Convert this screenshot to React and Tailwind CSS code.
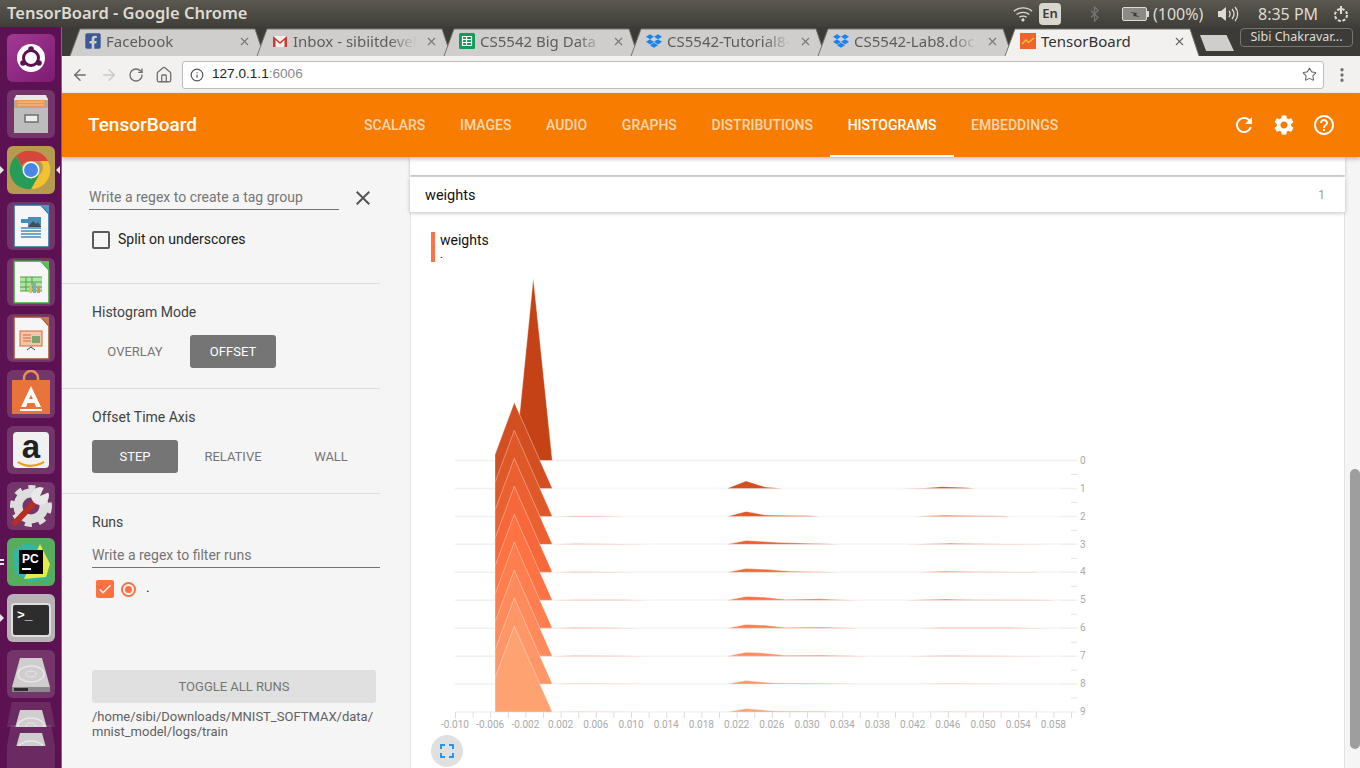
import { Fragment } from 'react'
import { ArrowLeft, ArrowRight, Home, Info, MoreVertical, RotateCw, Star, X } from 'lucide-react'
import { FaDropbox, FaFacebookSquare } from 'react-icons/fa'
import { MdCheck, MdClose, MdFullscreen, MdHelpOutline, MdRefresh, MdSettings } from 'react-icons/md'

const navItems = ['Scalars', 'Images', 'Audio', 'Graphs', 'Distributions', 'Histograms', 'Embeddings']
const layerColors = ['#c54216', '#d34e20', '#df5828', '#ea6030', '#f6683a', '#ff7243', '#ff7e50', '#ff8a5c', '#ff9668', '#ffa272']

// tail bumps per step, [x, height above the baseline]
const tails = [
  [],
  [[727, 0], [746, 7.5], [765, 1.5], [783, 0], [900, 0], [925, 0.5], [942, 1.8], [965, 1], [976, 0]],
  [[575, 0.5], [600, 0.4], [624, 0], [727, 0], [746, 5], [765, 1.4], [810, 0.6], [820, 0], [915, 0], [930, 0.6], [945, 1.2], [975, 0.6], [1005, 0.4], [1010, 0]],
  [[575, 0.6], [620, 0.4], [650, 0], [727, 0], [746, 3.8], [780, 1.8], [825, 0.6], [840, 0], [905, 0], [935, 0.6], [950, 1.2], [975, 0.6], [1005, 0.4], [1055, 0]],
  [[575, 0.6], [610, 0.4], [640, 0], [727, 0], [746, 3.8], [765, 3], [790, 1.1], [830, 0.4], [838, 0], [918, 0], [945, 1.1], [975, 0.6], [1035, 0.3], [1040, 0]],
  [[575, 0.6], [620, 0.4], [650, 0], [727, 0], [746, 3.8], [765, 3], [785, 0.8], [820, 1.6], [840, 0.4], [860, 0], [905, 0], [945, 1.2], [975, 0.4], [1010, 0.6], [1050, 0.3], [1055, 0]],
  [[575, 0.6], [610, 0.4], [640, 0], [727, 0], [746, 3.8], [765, 3], [785, 0.8], [820, 1.1], [860, 0], [918, 0], [945, 0.7], [1010, 0.6], [1050, 0]],
  [[575, 0.6], [620, 0.4], [650, 0], [727, 0], [746, 3.8], [765, 3], [785, 0.8], [820, 1.1], [870, 0], [905, 0], [945, 0.7], [1050, 0]],
  [[575, 0.5], [620, 0.3], [650, 0], [727, 0], [746, 3.5], [775, 1], [820, 0.8], [860, 0], [918, 0], [945, 0.6], [1050, 0]],
  [[575, 0.5], [620, 0.3], [650, 0], [727, 0], [746, 3.5], [775, 1], [820, 0.8], [850, 0], [918, 0], [945, 0.6], [1050, 0]],
]

const xLabels = ['-0.010', '-0.006', '-0.002', '0.002', '0.006', '0.010', '0.014', '0.018', '0.022', '0.026', '0.030', '0.034', '0.038', '0.042', '0.046', '0.050', '0.054', '0.058']

function layerPoints(k, b) {
  if (k === 0) return `515,${b} 533.3,278 552.3,${b}`
  const tail = tails[k].map(([x, h]) => `${x},${b - h}`).join(' ')
  return `495,${b} 495,${b - 34} 514.3,${b - 86} 552.3,${b} ${tail} 1060,${b}`
}

function HistogramChart() {
  return (
    <svg viewBox="431 270 680 465" width="680" height="465" className="block">
      {layerColors.map((color, k) => {
        const b = 460.5 + 27.95 * k
        return (
          <Fragment key={k}>
            <line x1="455" x2="1077" y1={b} y2={b} stroke="#f0f0f0" strokeWidth="1.5" />
            <polygon points={layerPoints(k, b)} fill={color} stroke="#ffffff" strokeOpacity="0.45" strokeWidth="0.8" />
          </Fragment>
        )
      })}
      {Array.from({ length: 36 }, (_, i) => (
        <line key={i} x1={455.5 + i * 17.6} x2={455.5 + i * 17.6} y1="712" y2="718" stroke="#dddddd" />
      ))}
      {xLabels.map((label, i) => (
        <text key={label} x={455 + i * 35.2} y="728" textAnchor="middle" fontSize="10" fill="#aaaaaa">{label}</text>
      ))}
      {layerColors.map((_, k) => (
        <Fragment key={k}>
          <line x1="1071" x2="1077" y1={474.5 + 27.95 * k} y2={474.5 + 27.95 * k} stroke="#e3e3e3" opacity={k === 9 ? 0 : 1} />
          <text x="1080" y={464 + 27.85 * k} fontSize="10" fill="#aaaaaa">{k}</text>
        </Fragment>
      ))}
    </svg>
  )
}

function Tile({ bg = 'bg-white/15', children }) {
  return <div className={`h-12 w-12 shrink-0 overflow-hidden rounded-md ${bg}`}>{children}</div>
}

function DocIcon({ color, corner, children }) {
  return (
    <svg viewBox="0 0 48 48" className="h-12 w-12">
      <path d="M7 3h27l8 9v33H7z" fill="#f6f6f6" stroke={color} strokeWidth="1.5" />
      <path d="M34 3h8v9z" fill={corner} />
      {children}
    </svg>
  )
}

function ChromeLogo() {
  return (
    <svg viewBox="0 0 48 48" className="h-12 w-12">
      <path d="M24 5a19 19 0 0 1 17 10H24a9 9 0 0 0-9 5L9 10a19 19 0 0 1 15-5z" fill="#d8463b" />
      <path d="M41 15a19 19 0 0 1-17 28l8-14a9 9 0 0 0 1-14z" fill="#f2c230" />
      <path d="M9 10l9 16a9 9 0 0 0 14 3l-8 14A19 19 0 0 1 9 10z" fill="#279c57" />
      <circle cx="24" cy="24" r="8.5" fill="#fff" />
      <circle cx="24" cy="24" r="7" fill="#4a86e8" />
    </svg>
  )
}

function DiskIcon() {
  return (
    <svg viewBox="0 0 48 48" className="h-12 w-12">
      <path d="M13 8h22l8 29v5H5v-5z" fill="#cfcdcd" />
      <ellipse cx="24" cy="24" rx="13" ry="8" fill="none" stroke="#e8e8e8" strokeWidth="1.5" />
      <ellipse cx="24" cy="24" rx="5" ry="3" fill="none" stroke="#e8e8e8" />
      <path d="M5 37h38v5H5z" fill="#8a8a8a" />
      <path d="M7 38h14v3H7z" fill="#2d2d2d" />
    </svg>
  )
}

function Launcher() {
  return (
    <div className="relative flex h-full w-[62px] shrink-0 flex-col gap-2 overflow-hidden border-r border-[#8d5f87] bg-[#5c1252] pl-[7px] pt-[7px]">
      <Tile bg="bg-gradient-to-br from-[#a23a93] to-[#7d1a72]">
        <svg viewBox="0 0 48 48" className="h-12 w-12">
          <circle cx="24" cy="24" r="14" fill="#fff" />
          <circle cx="24" cy="24" r="7.5" fill="none" stroke="#5c1252" strokeWidth="3" />
          <circle cx="24" cy="15" r="2.8" fill="#5c1252" />
          <circle cx="16" cy="29" r="2.8" fill="#5c1252" />
          <circle cx="32" cy="29" r="2.8" fill="#5c1252" />
        </svg>
      </Tile>
      <Tile>
        <svg viewBox="0 0 48 48" className="h-12 w-12">
          <path d="M7 8h34v35H7z" fill="#a9a9a9" />
          <path d="M9 5h30l2 5H7z" fill="#e6e6e6" />
          <path d="M9 10h30v8H9z" fill="#e29a5b" />
          <path d="M11 12h26M11 15h26" stroke="#f3c48f" />
          <path d="M7 18h34v25H7z" fill="#bdbdbd" />
          <rect x="18" y="25" width="13" height="7" fill="#eeeeee" stroke="#6f6f6f" strokeWidth="1.5" />
        </svg>
      </Tile>
      <Tile bg="bg-[#b59a50]"><ChromeLogo /></Tile>
      <Tile>
        <DocIcon color="#1f6d96" corner="#4d9bc4">
          <rect x="14" y="17" width="7" height="4" fill="#3f8fc0" />
          <rect x="21" y="15" width="13" height="10" fill="#4a8db5" />
          <path d="M21 25l5-6 3 3 2-2 3 5z" fill="#3d4f5c" />
          <path d="M14 26h20M14 29h20M14 32h20M14 35h20" stroke="#3f8fc0" strokeWidth="1.5" />
        </DocIcon>
      </Tile>
      <Tile>
        <DocIcon color="#3aa535" corner="#5dbf58">
          <path d="M13 19h22v14H13z" fill="#b5e0a8" />
          <path d="M13 19h22M13 24h22M13 29h22M13 33h22M19 19v14M25 19v14" stroke="#43a73e" />
          <rect x="22" y="27" width="3" height="8" fill="#e6b85c" />
          <rect x="26" y="25" width="3" height="10" fill="#7fa8cf" />
          <rect x="30" y="28" width="3" height="7" fill="#d98d6a" />
        </DocIcon>
      </Tile>
      <Tile>
        <DocIcon color="#a2502a" corner="#c1794f">
          <rect x="13" y="17" width="22" height="15" fill="#f3c6ac" stroke="#cf6a38" />
          <path d="M16 21h8M16 24h8M16 27h8" stroke="#cf6a38" />
          <rect x="25" y="22" width="8" height="7" fill="#79a570" />
          <path d="M20 36l4-3 4 3" fill="none" stroke="#444" />
        </DocIcon>
      </Tile>
      <Tile>
        <svg viewBox="0 0 48 48" className="h-12 w-12">
          <path d="M17 12V8a7 7 0 0 1 14 0v4" fill="none" stroke="#ee8d57" strokeWidth="2.5" />
          <path d="M5 10h38v34H5z" fill="#e8743b" />
          <path fillRule="evenodd" d="M24 16l10 21h-5l-1.5-4h-7L19 37h-5zM24 25l-2 4h4z" fill="#fff" />
          <rect x="13" y="39" width="22" height="2" fill="#fff" />
        </svg>
      </Tile>
      <Tile>
        <div className="m-[6px] flex h-9 w-9 flex-col items-center rounded-sm bg-[#f1f1f1]">
          <span className="font-['Liberation_Sans',sans-serif] text-[33px] font-bold leading-[30px] text-[#222]">a</span>
          <svg viewBox="0 0 36 8" className="-mt-px w-8"><path d="M3 1c8 6 20 6 30 0" fill="none" stroke="#ee9b1e" strokeWidth="2.5" /></svg>
        </div>
      </Tile>
      <Tile>
        <svg viewBox="0 0 48 48" className="h-12 w-12">
          <circle cx="24" cy="24" r="13" fill="none" stroke="#dddddd" strokeWidth="9" />
          <circle cx="24" cy="24" r="18.5" fill="none" stroke="#dddddd" strokeWidth="5" strokeDasharray="7 7" />
          <path d="M8 41l21-22" stroke="#b52d23" strokeWidth="6" strokeLinecap="round" />
          <circle cx="33" cy="14" r="9" fill="#e8e8e8" />
          <path d="M33 14l5-11 7 6z" fill="#76386d" />
        </svg>
      </Tile>
      <Tile bg="bg-[#55ad5d]">
        <svg viewBox="0 0 48 48" className="h-12 w-12">
          <path d="M6 12l14-7 14 5 8 31-18 3-16-8z" fill="#2fb9a5" />
          <path d="M33 6l10 20-4 13-22 2z" fill="#e7ea4c" />
          <rect x="12" y="12" width="24" height="24" fill="#000" />
          <text x="15" y="25" fontSize="12" fontWeight="700" fill="#fff" fontFamily="Liberation Sans">PC</text>
          <rect x="15" y="30" width="9" height="2" fill="#fff" />
        </svg>
      </Tile>
      <Tile bg="bg-[#b8b2b6]">
        <div className="m-1 mt-[9px] h-[34px] w-10 rounded-sm border-2 border-[#ddd] bg-[#2d2d2d] pl-1 pt-1 font-['Liberation_Mono',monospace] text-[13px] font-bold leading-none text-white">&gt;_</div>
      </Tile>
      <Tile><DiskIcon /></Tile>
      <div className="-mt-1 h-[30px] w-12 overflow-hidden bg-white/10 [clip-path:polygon(10%_0,90%_0,100%_100%,0_100%)]"><DiskIcon /></div>
      <div className="-mt-[10px] h-[26px] w-12 overflow-hidden bg-white/10 [clip-path:polygon(8%_0,92%_0,100%_100%,0_100%)]"><DiskIcon /></div>
      <div className="-mt-2 h-[26px] w-12 bg-white/10" />
      <span className="absolute left-0 top-[139px] h-[8px] w-[4px] bg-[#e8e8e8] [clip-path:polygon(0_0,100%_50%,0_100%)]" />
      <span className="absolute right-[1px] top-[139px] h-[8px] w-[4px] bg-[#e8e8e8] [clip-path:polygon(100%_0,100%_100%,0_50%)]" />
      <span className="absolute left-0 top-[532px] h-[2px] w-[4px] bg-[#e8e8e8]" />
      <span className="absolute left-0 top-[536px] h-[2px] w-[4px] bg-[#e8e8e8]" />
      <span className="absolute left-0 top-[587px] h-[8px] w-[4px] bg-[#e8e8e8] [clip-path:polygon(0_0,100%_50%,0_100%)]" />
    </div>
  )
}

function GmailIcon() {
  return (
    <svg viewBox="0 0 16 16" className="h-4 w-4">
      <path d="M1 3h14v11H1z" fill="#eeeeee" />
      <path d="M1 14V3l7 6 7-6v11h-2.5V7L8 11 3.5 7v7z" fill="#d3382c" />
    </svg>
  )
}

function SheetIcon() {
  return (
    <svg viewBox="0 0 16 16" className="h-4 w-4">
      <rect width="16" height="16" rx="1.5" fill="#0f9d58" />
      <path d="M3.5 3.5h9v9h-9zM3.5 6.5h9M3.5 9.5h9M7.5 3.5v9" fill="none" stroke="#fff" strokeWidth="1.2" />
    </svg>
  )
}

function BoardIcon() {
  return (
    <svg viewBox="0 0 16 16" className="h-4 w-4">
      <rect width="16" height="16" fill="#f0642c" />
      <path d="M2 11l4-4 2.5 2.5L14 5" fill="none" stroke="#f7c23c" strokeWidth="1.3" />
    </svg>
  )
}

const dropbox = <FaDropbox className="h-4 w-4 text-[#1a82e8]" />
const tabs = [
  { title: 'Facebook', icon: <FaFacebookSquare className="h-4 w-4 scale-110 text-[#3b5998]" /> },
  { title: 'Inbox - sibiitdevel', icon: <GmailIcon /> },
  { title: 'CS5542 Big Data', icon: <SheetIcon /> },
  { title: 'CS5542-Tutorial8-', icon: dropbox },
  { title: 'CS5542-Lab8.doc', icon: dropbox },
  { title: 'TensorBoard', icon: <BoardIcon />, active: true },
]

function ChromeTab({ title, icon, active }) {
  return (
    <div className={`relative -mr-[9px] h-[28px] w-[196px] shrink-0 ${active ? 'z-10' : ''}`}>
      <svg viewBox="0 0 196 28" className="absolute inset-0 h-full w-full">
        <path d="M1 28 L11 1 H186 L195 28" fill={active ? '#f2f1f0' : '#cfcecc'} stroke="#77756f" strokeWidth="1" />
      </svg>
      <div className="relative flex h-full items-center pb-[2px] pl-4">
        {icon}
        <span className={`ml-[5px] w-[124px] overflow-hidden whitespace-nowrap text-[15px] leading-[24px] ${active ? 'text-[#333]' : 'text-[#5d5d5d] [mask-image:linear-gradient(to_right,black_78%,transparent)]'}`}>{title}</span>
        <X className={`ml-2 h-[13px] w-[13px] ${active ? 'text-[#666]' : 'text-[#777]'}`} strokeWidth={2} />
      </div>
    </div>
  )
}

function TopBar() {
  return (
    <div className="flex h-[27px] shrink-0 items-center bg-gradient-to-b from-[#5a5850] to-[#3f3e39] pl-[7px] font-['Noto_Sans',sans-serif] text-[#dfdbd2]">
      <span className="w-[1006px] text-[16.5px] font-semibold">TensorBoard - Google Chrome</span>
      <svg viewBox="0 0 22 16" className="h-[16px] w-[20px]" fill="none" stroke="#dfdbd2" strokeWidth="1.5">
        <path d="M1 5c5-5 15-5 20 0M4 8.5c4-3 10-3 14 0M7 11.5c2-1.5 6-1.5 8 0" />
        <circle cx="11" cy="14.5" r="1" fill="#dfdbd2" />
      </svg>
      <span className="ml-[6px] flex h-[22px] w-[22px] items-center justify-center rounded-sm bg-[#d9d6cc] text-[13px] font-semibold text-[#3c3b37]">En</span>
      <svg viewBox="0 0 10 18" className="ml-[29px] h-[16px] w-[9px]" fill="none" stroke="#77756f" strokeWidth="1.4"><path d="M1 5l8 8-4 4V1l4 4-8 8" /></svg>
      <svg viewBox="0 0 27 14" className="ml-[23px] h-[14px] w-[27px]">
        <rect x="0.5" y="0.5" width="24" height="13" rx="1.5" fill="#8b8a84" stroke="#dfdbd2" />
        <rect x="25" y="4" width="2" height="6" fill="#dfdbd2" />
        <path d="M8 5l7 1-1 2 4 2-7-1 1-2z" fill="#3c3b37" />
      </svg>
      <span className="ml-[4px] w-[52px] text-[16px]">(100%)</span>
      <svg viewBox="0 0 22 16" className="ml-[12px] h-[16px] w-[22px]" fill="none" stroke="#dfdbd2" strokeWidth="1.3">
        <path d="M1 5h3l5-4v14l-5-4H1z" fill="#dfdbd2" stroke="none" />
        <path d="M12 5c1.5 2 1.5 4 0 6M15 3c2.5 3 2.5 7 0 10M18 1c3.5 4 3.5 10 0 14" />
      </svg>
      <span className="ml-[19px] w-[60px] whitespace-nowrap text-[16px]">8:35 PM</span>
      <svg viewBox="0 0 18 18" className="ml-[14px] h-[18px] w-[18px]" fill="none" stroke="#dfdbd2" strokeWidth="2">
        <circle cx="9" cy="10" r="6" strokeDasharray="3 1.7" />
        <path d="M9 1v8" />
      </svg>
    </div>
  )
}

function TabStrip() {
  return (
    <div className="flex h-[29px] shrink-0 bg-[#3c3b37] pl-[7px] pt-px font-['Noto_Sans',sans-serif]">
      {tabs.map((tab) => <ChromeTab key={tab.title} {...tab} />)}
      <div className="ml-[9px] mt-[7px] h-[16px] w-[34px] bg-[#cfcecc] [clip-path:polygon(0_0,78%_0,100%_100%,18%_100%)]" />
      <div className="ml-[6px] flex h-[19px] w-[113px] items-center justify-center rounded-sm border border-[#77756f] text-[12.5px] text-[#dfdbd2]">Sibi Chakravar...</div>
    </div>
  )
}

function Toolbar() {
  return (
    <div className="flex h-[37px] shrink-0 items-center bg-[#f2f1f0] pl-[9px] text-[#6e6e6e]">
      <ArrowLeft className="h-[18px] w-[18px]" strokeWidth={1.8} />
      <ArrowRight className="ml-[11px] h-[18px] w-[18px] text-[#c9c9c9]" strokeWidth={1.8} />
      <RotateCw className="ml-[10px] h-[16px] w-[16px]" strokeWidth={2} />
      <Home className="ml-[11px] h-[18px] w-[18px]" strokeWidth={1.7} />
      <div className="ml-[9px] flex h-[28px] w-[1142px] items-center rounded-[3px] border border-[#bdbdbd] bg-white pl-[7px] pr-[6px]">
        <Info className="h-[14px] w-[14px] text-[#555]" strokeWidth={2} />
        <span className="ml-[8px] flex-1 font-['Liberation_Sans',sans-serif] text-[13.6px] text-[#222]">127.0.1.1<span className="text-[#8a8a8a]">:6006</span></span>
        <Star className="h-[15px] w-[15px] text-[#666]" strokeWidth={1.7} />
      </div>
      <MoreVertical className="ml-[9px] h-[18px] w-[18px]" strokeWidth={2.4} />
    </div>
  )
}

function Header() {
  return (
    <div className="relative z-10 flex h-[64px] shrink-0 items-center bg-[#f77c00] pl-[26px] text-white shadow-[0_2px_4px_rgba(0,0,0,0.25)]">
      <span className="w-[258.75px] text-[19px] font-medium">TensorBoard</span>
      <nav className="flex h-full">
        {navItems.map((item) => {
          const on = item === 'Histograms'
          return (
            <span key={item} className={`flex h-full items-center border-b-2 px-[17.35px] pt-[2px] text-[14px] font-medium uppercase ${on ? 'border-white text-white' : 'border-transparent text-white/70'}`}>{item}</span>
          )
        })}
      </nav>
      <div className="ml-[156px] flex items-center gap-[16px]">
        <MdRefresh className="h-6 w-6" />
        <MdSettings className="h-6 w-6" />
        <MdHelpOutline className="h-6 w-6" />
      </div>
    </div>
  )
}

function ModeButton({ label, on, className = '' }) {
  return (
    <span className={`flex h-[33px] w-[86px] items-center justify-center rounded-[3px] pt-px text-[13px] uppercase ${on ? 'bg-[#757575] text-white' : 'text-[#757575]'} ${className}`}>{label}</span>
  )
}

function Sidebar() {
  return (
    <div className="w-[332px] shrink-0 bg-[#f5f5f5] text-[14px]">
      <div className="h-[127px] w-[318px] border-b border-[#dcdcdc] pt-[29px]">
        <div className="flex items-center pl-[27px]">
          <div className="h-[23px] w-[250px] border-b border-[#757575] leading-[20px] text-[#757575]">Write a regex to create a tag group</div>
          <MdClose className="ml-[12px] h-6 w-6 text-[#555]" />
        </div>
        <div className="ml-[30px] mt-[19px] flex items-center">
          <span className="h-[18px] w-[18px] rounded-[2px] border-2 border-[#5a5a5a]" />
          <span className="ml-2 text-[#212121]">Split on underscores</span>
        </div>
      </div>
      <div className="h-[105px] w-[318px] border-b border-[#dcdcdc] pl-[30px] pt-5">
        <div className="leading-4 text-[#424242]">Histogram Mode</div>
        <div className="mt-[15px] flex gap-3">
          <ModeButton label="Overlay" />
          <ModeButton label="Offset" on />
        </div>
      </div>
      <div className="h-[105px] w-[318px] border-b border-[#dcdcdc] pl-[30px] pt-5">
        <div className="leading-4 text-[#424242]">Offset Time Axis</div>
        <div className="mt-[15px] flex gap-3">
          <ModeButton label="Step" on />
          <ModeButton label="Relative" />
          <ModeButton label="Wall" />
        </div>
      </div>
      <div className="w-[318px] pl-[30px] pt-5">
        <div className="leading-4 text-[#424242]">Runs</div>
        <div className="mt-[15px] h-[23px] border-b border-[#757575] leading-[20px] text-[#757575]">Write a regex to filter runs</div>
        <div className="ml-1 mt-3 flex items-center">
          <span className="flex h-[18px] w-[18px] items-center justify-center rounded-[2px] bg-[#ff7043]"><MdCheck className="h-4 w-4 text-white" /></span>
          <span className="ml-[7px] flex h-[15px] w-[15px] items-center justify-center rounded-full border-2 border-[#ff7043]"><span className="h-[7px] w-[7px] rounded-full bg-[#ff7043]" /></span>
          <span className="ml-[10px] -mt-1 text-[#212121]">.</span>
        </div>
        <div className="mt-[72px] flex h-[33px] w-[284px] items-center justify-center rounded-[3px] bg-[#e0e0e0] pt-px text-[13px] uppercase text-[#757575]">Toggle all runs</div>
        <div className="mt-[6px] w-[288px] text-[13px] leading-[15px] text-[#616161]">/home/sibi/Downloads/MNIST_SOFTMAX/data/ mnist_model/logs/train</div>
      </div>
    </div>
  )
}

function Main() {
  return (
    <div className="flex flex-1 overflow-hidden bg-[#f5f5f5]">
      <div className="w-[951px] shrink-0 pl-4">
        <div className="h-[18px] bg-white shadow-[0_1px_3px_rgba(0,0,0,0.25)]" />
        <div className="relative mt-[2px] flex h-[35px] items-center justify-between bg-white pl-[15px] pr-[20px] shadow-[0_1px_4px_rgba(0,0,0,0.25)]">
          <span className="pt-[2px] text-[14.5px] text-[#111]">weights</span>
          <span className="text-[12px] text-[#9e9e9e]">1</span>
        </div>
        <div className="h-[556px] overflow-hidden border-x border-[#e3e3e3] bg-white pl-5 pt-5">
          <div className="flex h-[30px] border-l-4 border-[#ff7043] pl-[5px]">
            <div>
              <div className="text-[14px] leading-4 text-[#111]">weights</div>
              <div className="text-[11px] leading-[14px] text-[#111]">.</div>
            </div>
          </div>
          <div className="mt-2"><HistogramChart /></div>
          <div className="flex h-8 w-8 items-center justify-center rounded-full bg-[#e0e0e0]"><MdFullscreen className="h-6 w-6 text-[#2196f3]" /></div>
        </div>
      </div>
      <div className="flex-1 pl-[5px] pt-[312px]">
        <div className="h-[280px] w-[10px] rounded-full bg-[#9e9e9e]" />
      </div>
    </div>
  )
}

export default function App() {
  return (
    <div className="flex h-[768px] w-[1360px] flex-col overflow-hidden bg-white font-['Roboto',sans-serif]">
      <TopBar />
      <div className="flex min-h-0 flex-1">
        <Launcher />
        <div className="flex min-w-0 flex-1 flex-col">
          <TabStrip />
          <Toolbar />
          <Header />
          <div className="flex min-h-0 flex-1">
            <Sidebar />
            <Main />
          </div>
        </div>
      </div>
    </div>
  )
}
